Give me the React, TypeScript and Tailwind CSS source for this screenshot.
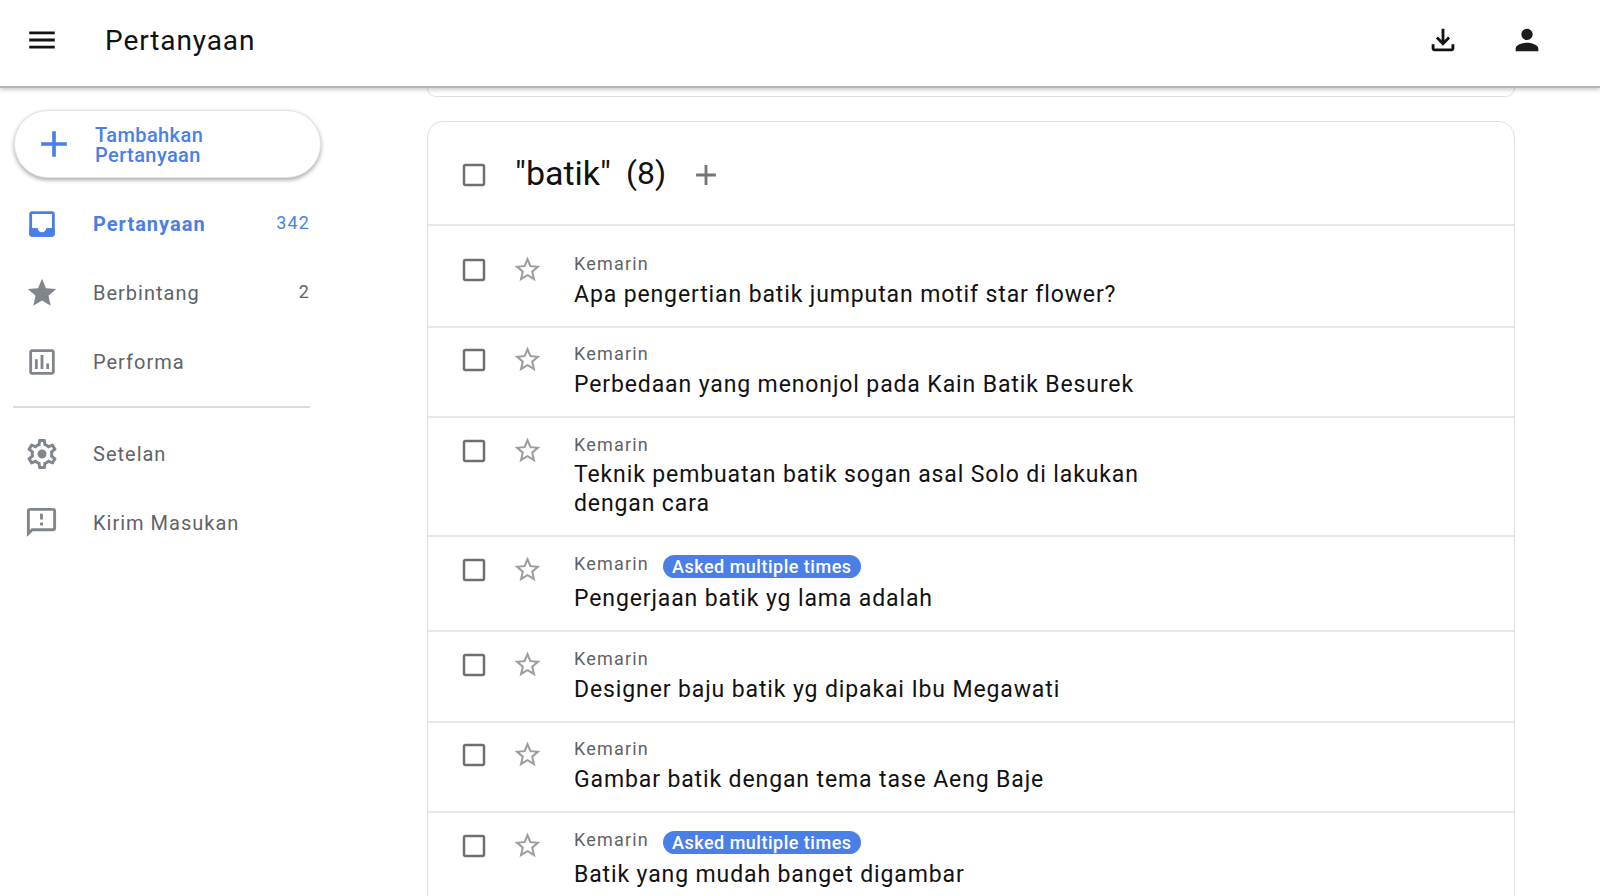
import React from 'react';

const paths = {
  menu: 'M3 18h18v-2H3v2zm0-5h18v-2H3v2zm0-7v2h18V6H3z',
  download: 'M18 15v3H6v-3H4v3c0 1.1.9 2 2 2h12c1.1 0 2-.9 2-2v-3h-2zm-1-4l-1.41-1.41L13 12.17V4h-2v8.17L8.41 9.59 7 11l5 5 5-5z',
  person: 'M12 12c2.21 0 4-1.79 4-4s-1.79-4-4-4-4 1.79-4 4 1.79 4 4 4zm0 2c-2.67 0-8 1.34-8 4v2h16v-2c0-2.66-5.33-4-8-4z',
  add: 'M19 13h-6v6h-2v-6H5v-2h6V5h2v6h6v2z',
  inbox: 'M19 3H5a2 2 0 0 0-2 2v14c0 1.1.9 2 2 2h14c1.1 0 2-.9 2-2V5a2 2 0 0 0-2-2zm0 12h-4c0 1.66-1.35 3-3 3s-3-1.34-3-3H5V5h14v10z',
  inboxFill: 'M3 15h6c0 1.66 1.35 3 3 3s3-1.34 3-3h6v4c0 1.1-.9 2-2 2H5c-1.1 0-2-.9-2-2z',
  star: 'M12 17.27L18.18 21l-1.64-7.03L22 9.24l-7.19-.61L12 2 9.19 8.63 2 9.24l5.46 4.73L5.82 21z',
  starBorder: 'M22 9.24l-7.19-.62L12 2 9.19 8.63 2 9.24l5.46 4.73L5.82 21 12 17.27 18.18 21l-1.63-7.03L22 9.24zM12 15.4l-3.76 2.27 1-4.28-3.32-2.88 4.38-.38L12 6.1l1.71 4.04 4.38.38-3.32 2.88 1 4.28L12 15.4z',
  chart: 'M19 3H5c-1.1 0-2 .9-2 2v14c0 1.1.9 2 2 2h14c1.1 0 2-.9 2-2V5c0-1.1-.9-2-2-2zm0 16H5V5h14v14zM7 10h2v7H7zm4-3h2v10h-2zm4 6h2v4h-2z',
  settings: 'M19.43 12.98c.04-.32.07-.64.07-.98 0-.34-.03-.66-.07-.98l2.11-1.65c.19-.15.24-.42.12-.64l-2-3.46c-.09-.16-.26-.25-.44-.25-.06 0-.12.01-.17.03l-2.49 1c-.52-.4-1.08-.73-1.69-.98l-.38-2.65C14.46 2.18 14.25 2 14 2h-4c-.25 0-.46.18-.49.42l-.38 2.65c-.61.25-1.17.59-1.69.98l-2.49-1c-.06-.02-.12-.03-.18-.03-.17 0-.34.09-.43.25l-2 3.46c-.13.22-.07.49.12.64l2.11 1.65c-.04.32-.07.65-.07.98 0 .33.03.66.07.98l-2.11 1.65c-.19.15-.24.42-.12.64l2 3.46c.09.16.26.25.44.25.06 0 .12-.01.17-.03l2.49-1c.52.4 1.08.73 1.69.98l.38 2.65c.03.24.24.42.49.42h4c.25 0 .46-.18.49-.42l.38-2.65c.61-.25 1.17-.59 1.69-.98l2.49 1c.06.02.12.03.18.03.17 0 .34-.09.43-.25l2-3.46c.12-.22.07-.49-.12-.64l-2.11-1.65zm-1.98-1.71c.04.31.05.52.05.73 0 .21-.02.43-.05.73l-.14 1.13.89.7 1.08.84-.7 1.21-1.27-.51-1.04-.42-.9.68c-.43.32-.84.56-1.25.73l-1.06.43-.16 1.13-.2 1.35h-1.4l-.19-1.35-.16-1.13-1.06-.43c-.43-.18-.83-.41-1.23-.71l-.91-.7-1.06.43-1.27.51-.7-1.21 1.08-.84.89-.7-.14-1.13c-.03-.31-.05-.54-.05-.74s.02-.43.05-.73l.14-1.13-.89-.7-1.08-.84.7-1.21 1.27.51 1.04.42.9-.68c.43-.32.84-.56 1.25-.73l1.06-.43.16-1.13.2-1.35h1.39l.19 1.35.16 1.13 1.06.43c.43.18.83.41 1.23.71l.91.7 1.06-.43 1.27-.51.7 1.21-1.07.85-.89.7.14 1.13zM12 9a3 3 0 1 0 0 6 3 3 0 0 0 0-6z',
  feedback: 'M20 2H4c-1.1 0-1.99.9-1.99 2L2 22l4-4h14c1.1 0 2-.9 2-2V4c0-1.1-.9-2-2-2zm0 14H5.17L4 17.17V4h16v12zm-9-4h2v2h-2zm0-6h2v4h-2z',
  checkbox: 'M19 5v14H5V5h14m0-2H5c-1.1 0-2 .9-2 2v14c0 1.1.9 2 2 2h14c1.1 0 2-.9 2-2V5c0-1.1-.9-2-2-2z',
};

const Icon = ({ d, className }: { d: string; className: string }) => (
  <svg viewBox="0 0 24 24" fill="currentColor" className={className}>
    <path d={d} />
  </svg>
);

const NavItem = ({ icon, label, count, active }: { icon: React.ReactNode; label: string; count?: string; active?: boolean }) => (
  <div className={`flex items-center h-[69px] pl-[25px] pr-[117px] ${active ? 'text-[#4a7fe8]' : 'text-[#5f6368]'}`}>
    <div className="w-[68px] shrink-0">{icon}</div>
    <span className={`text-[20px] tracking-[1px] ${active ? 'font-bold' : ''}`}>{label}</span>
    {count && <span className="ml-auto mb-[2px] text-[18px] tracking-[1.1px]">{count}</span>}
  </div>
);

const rows = [
  { title: 'Apa pengertian batik jumputan motif star flower?', h: 'h-[102px] pt-[26px]', mt: 'mt-[6px]' },
  { title: 'Perbedaan yang menonjol pada Kain Batik Besurek', h: 'h-[90px] pt-[14px]', mt: 'mt-[6px]' },
  { title: 'Teknik pembuatan batik sogan asal Solo di lakukan dengan cara', h: 'h-[119px] pt-[15px]', mt: 'mt-[5px]' },
  { title: 'Pengerjaan batik yg lama adalah', h: 'h-[95px] pt-[15px]', mt: 'mt-[10px]', badge: true },
  { title: 'Designer baju batik yg dipakai Ibu Megawati', h: 'h-[91px] pt-[15px]', mt: 'mt-[6px]' },
  { title: 'Gambar batik dengan tema tase Aeng Baje', h: 'h-[90px] pt-[14px]', mt: 'mt-[6px]' },
  { title: 'Batik yang mudah banget digambar', h: 'h-[95px] pt-[15px]', mt: 'mt-[10px]', badge: true },
];

const App: React.FC = () => (
  <div className="h-[896px] overflow-hidden bg-white flex flex-col font-['Roboto',sans-serif]">
    {/* Top bar */}
    <header className="relative z-10 h-[88px] shrink-0 bg-white flex items-center pl-[25px] pr-[56px] pb-[6px] border-b-2 border-[#b5b5b5] shadow-[0_2px_4px_rgba(0,0,0,0.2)]">
      <Icon d={paths.menu} className="w-[34px] h-[34px] text-[#111]" />
      <h1 className="ml-[46px] mt-[2px] text-[28px] tracking-[0.9px] text-[#111]">Pertanyaan</h1>
      <div className="ml-auto flex items-center gap-[50px]">
        <Icon d={paths.download} className="w-[34px] h-[34px] text-[#111]" />
        <Icon d={paths.person} className="w-[34px] h-[34px] text-[#1c1c1c]" />
      </div>
    </header>

    <div className="flex flex-1 min-h-0">
      {/* Sidebar */}
      <aside className="w-[427px] shrink-0 pt-[22px]">
        <div className="ml-[14px] w-[307px] h-[68px] rounded-full bg-white border border-[#e4e4e4] shadow-[0_2px_4px_rgba(0,0,0,0.35)] flex items-center pl-[17px] text-[#4a7fe8]">
          <Icon d={paths.add} className="w-[44px] h-[44px]" />
          <span className="ml-[19px] pt-[2px] text-[20px] leading-[20px] tracking-[0.4px] font-medium">Tambahkan<br />Pertanyaan</span>
        </div>
        <div className="mt-[11px]">
          <NavItem active label="Pertanyaan" count="342" icon={
            <svg viewBox="0 0 24 24" fill="currentColor" className="w-[34px] h-[34px]">
              <path d={paths.inbox} />
              <path d={paths.inboxFill} />
            </svg>
          } />
          <NavItem label="Berbintang" count="2" icon={<Icon d={paths.star} className="w-[34px] h-[34px] text-[#80868b]" />} />
          <NavItem label="Performa" icon={<Icon d={paths.chart} className="w-[34px] h-[34px] text-[#80868b]" />} />
        </div>
        <div className="ml-[13px] w-[297px] h-[2px] bg-[#dadce0] mt-[10px] mb-[11px]" />
        <NavItem label="Setelan" icon={<Icon d={paths.settings} className="w-[36px] h-[36px] -ml-[1px] text-[#80868b]" />} />
        <NavItem label="Kirim Masukan" icon={<Icon d={paths.feedback} className="w-[35px] h-[35px] -ml-[1px] text-[#80868b]" />} />
      </aside>

      {/* Question list */}
      <main className="w-[1088px] shrink-0 min-w-0">
        <div className="h-[9px] border border-t-0 border-[#e0e0e0] rounded-b-[16px]" />
        <div className="mt-[24px] border border-[#e0e0e0] rounded-t-[16px]">
          <div className="h-[104px] flex items-center pl-[31px] border-b-2 border-[#e8e8e8]">
            <Icon d={paths.checkbox} className="w-[30px] h-[30px] mt-[3px] text-[#6f6f6f]" />
            <span className="ml-[26px] text-[34px] text-[#111]">"batik"</span>
            <span className="ml-[15px] text-[32px] text-[#111]">(8)</span>
            <Icon d={paths.add} className="ml-[23px] mt-[3px] w-[34px] h-[34px] text-[#757575]" />
          </div>
          {rows.map((row) => (
            <div key={row.title} className={`${row.h} flex items-start pl-[31px] border-b-2 border-[#e8e8e8]`}>
              <Icon d={paths.checkbox} className="w-[30px] h-[30px] mt-[3px] text-[#6f6f6f]" />
              <Icon d={paths.starBorder} className="ml-[23px] w-[31px] h-[31px] mt-[2px] text-[#9e9e9e]" />
              <div className="ml-[31px] w-[590px]">
                <div className="flex items-center h-[22px] text-[18px] tracking-[1.2px] text-[#5f6368]">
                  Kemarin
                  {row.badge && (
                    <span className="ml-[14px] mt-[6px] h-[23px] px-[9px] rounded-full bg-[#4a7fe8] text-white text-[18px] leading-[23px] tracking-[0.5px] font-medium whitespace-nowrap">Asked multiple times</span>
                  )}
                </div>
                <div className={`text-[23px] leading-[29px] tracking-[0.88px] text-[#111] ${row.mt}`}>{row.title}</div>
              </div>
            </div>
          ))}
        </div>
      </main>
    </div>
  </div>
);

export default App;
